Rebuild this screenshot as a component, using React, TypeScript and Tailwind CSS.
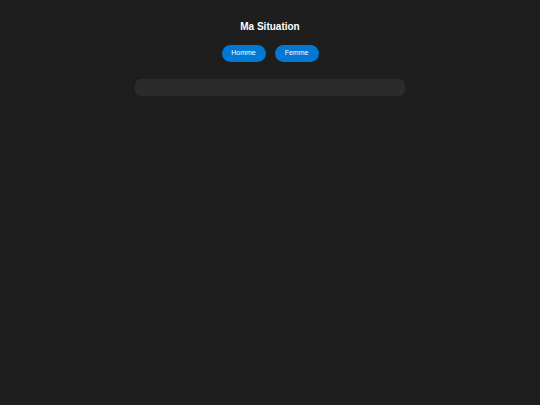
export default function App() {
  return (
    <div className="min-h-[405px] w-full bg-[#1e1e1e] font-['Liberation_Sans',Arial,sans-serif]">
      <div className="flex flex-col items-center pt-[19px]">
        <h1 className="text-[10px] font-bold leading-[15px] text-white">Ma Situation</h1>
        <div className="mt-[11px] flex gap-[9px]">
          <button className="h-[17px] w-[44px] rounded-full bg-[#0078d4] text-[7px] text-white">Homme</button>
          <button className="h-[17px] w-[44px] rounded-full bg-[#0078d4] text-[7px] text-white">Femme</button>
        </div>
        <div className="mt-[17px] h-[17px] w-[270px] rounded-[6px] bg-[#2b2b2b]" />
      </div>
    </div>
  )
}
